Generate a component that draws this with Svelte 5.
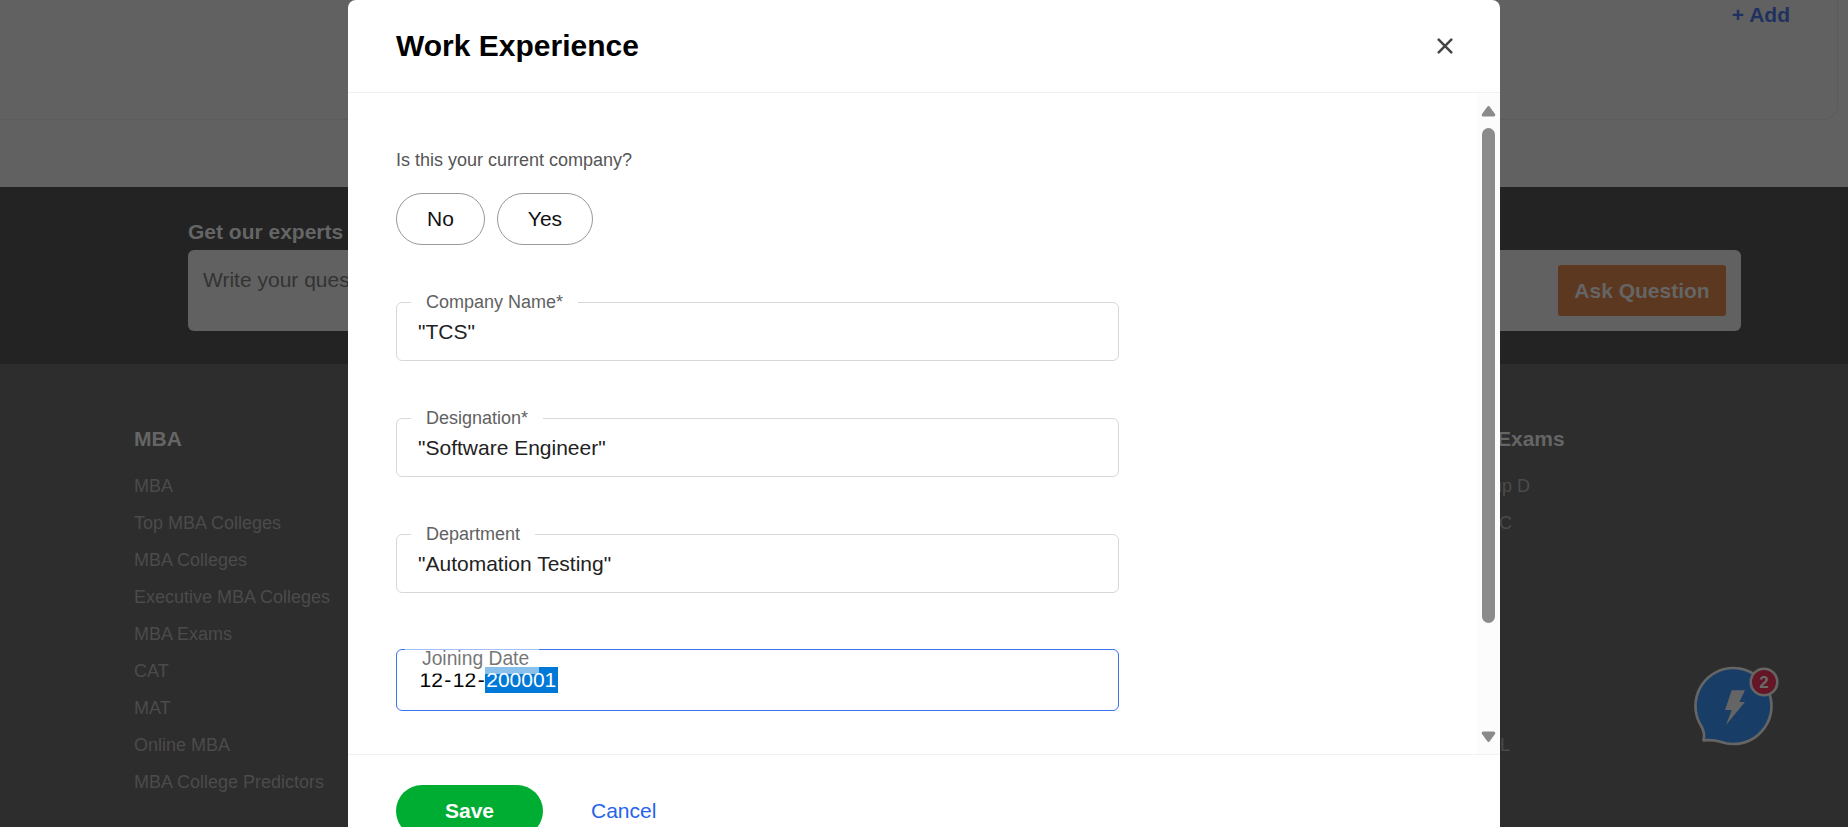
<script>
  const mbaLinks = [
    'MBA',
    'Top MBA Colleges',
    'MBA Colleges',
    'Executive MBA Colleges',
    'MBA Exams',
    'CAT',
    'MAT',
    'Online MBA',
    'MBA College Predictors'
  ];
  const examLinks = ['Group D', 'UPSC', '', '', '', '', '', 'CHSL'];
  const fields = [
    { label: 'Company Name*', value: '"TCS"' },
    { label: 'Designation*', value: '"Software Engineer"' },
    { label: 'Department', value: '"Automation Testing"' }
  ];
</script>

<div class="page">
  <section class="profile">
    <div class="card"><span class="add">+ Add</span></div>
  </section>

  <section class="ask">
    <div class="ask-title">Get our experts</div>
    <div class="ask-box">
      <span class="ask-hint">Write your question</span>
      <button class="ask-btn">Ask Question</button>
    </div>
  </section>

  <footer class="links">
    <div class="col">
      <h4>MBA</h4>
      {#each mbaLinks as link}
        <div class="link">{link}</div>
      {/each}
    </div>
    <div class="col exams">
      <h4>Exams</h4>
      {#each examLinks as link}
        <div class="link">{link}</div>
      {/each}
    </div>
  </footer>

  <svg class="chat" viewBox="0 0 130 110" width="130" height="110">
    <path
      d="M33.5 90.3 C34.6 85.5 34.3 81.5 31.5 76.5 A38 38 0 1 1 50.5 91.7 C44.5 89.8 39.5 90 33.5 90.3 Z"
      fill="#183d66" stroke="#656565" stroke-width="2.7" stroke-linejoin="round" />
    <path d="M61.7 40.3 H75 L69.3 52 H75 L56 75 L61.7 60 H55 Z" fill="#656565" />
    <circle cx="94" cy="32" r="13.3" fill="#641626" stroke="#656565" stroke-width="2.6" />
    <text x="94" y="38" text-anchor="middle">2</text>
  </svg>

  <div class="modal">
    <header>
      <h2>Work Experience</h2>
      <svg class="close" width="16" height="16" viewBox="0 0 16 16">
        <path d="M1.7 1.7 L14.3 14.3 M14.3 1.7 L1.7 14.3" stroke="#444" stroke-width="2.5" stroke-linecap="round" />
      </svg>
    </header>

    <div class="body">
      <div class="form">
        <div class="question">Is this your current company?</div>
        <div class="choices">
          <button class="pill no">No</button>
          <button class="pill yes">Yes</button>
        </div>
        {#each fields as f}
          <div class="field">
            <span class="label">{f.label}</span>
            <span class="value">{f.value}</span>
          </div>
        {/each}
        <div class="field date">
          <span class="parts"><i>12</i>-<i>12</i>-<i class="sel">200001</i></span>
          <span class="date-label">Joining Date</span>
        </div>
      </div>
      <div class="scrollbar">
        <svg width="15" height="12" viewBox="0 0 15 12">
          <path d="M7.5 2.5 L12.8 9.9 H2.2 Z" fill="#8b8b8b" stroke="#8b8b8b" stroke-width="3" stroke-linejoin="round" />
        </svg>
        <div class="thumb"></div>
        <svg class="down" width="15" height="12" viewBox="0 0 15 12">
          <path d="M7.5 9.5 L12.8 2.1 H2.2 Z" fill="#8b8b8b" stroke="#8b8b8b" stroke-width="3" stroke-linejoin="round" />
        </svg>
      </div>
    </div>

    <div class="actions">
      <button class="save">Save</button>
      <span class="cancel">Cancel</span>
    </div>
  </div>
</div>

<style>
  :global(body) {
    margin: 0;
    overflow: hidden;
  }
  .page,
  .page * {
    box-sizing: border-box;
  }
  .page {
    position: relative;
    width: 1848px;
    height: 827px;
    overflow: hidden;
    display: flex;
    flex-direction: column;
    font: 21px/24px 'Liberation Sans', Arial, sans-serif;
    background: #2d2d2d;
  }
  button {
    font: inherit;
    padding: 0;
    border: 0;
  }
  .profile {
    height: 187px;
    flex: none;
    background: #616161;
  }
  .card {
    width: 1838px;
    height: 120px;
    border: 1px solid #5b5b5b;
    border-width: 0 1px 1px 0;
    border-radius: 0 0 15px 0;
    padding: 3px 47px 0 0;
    text-align: right;
    font-weight: bold;
    color: #20315f;
  }
  .ask {
    height: 177px;
    flex: none;
    background: #232323;
    padding: 33px 107px 0 188px;
  }
  .ask-title {
    font-weight: bold;
    color: #656565;
    margin-bottom: 6px;
  }
  .ask-box {
    height: 81px;
    background: #616161;
    border-radius: 6px;
    display: flex;
    justify-content: space-between;
    padding: 15px 15px 0 15px;
  }
  .ask-hint {
    margin-top: 3px;
    color: #333;
  }
  .ask-btn {
    width: 168px;
    height: 51px;
    border-radius: 3px;
    background: #5c3820;
    color: #656565;
    font-weight: bold;
  }
  .links {
    display: flex;
    padding: 63px 0 0 134px;
    color: #4b4b4b;
    font-size: 18px;
    line-height: 37px;
  }
  .col {
    width: 1328px;
  }
  .col.exams {
    width: 200px;
  }
  h4 {
    margin: 0 0 17px;
    font-size: 21px;
    line-height: 24px;
    color: #656565;
  }
  .exams h4 {
    margin-left: 35px;
  }
  .link {
    height: 37px;
  }
  .chat {
    position: absolute;
    left: 1670px;
    top: 650px;
  }
  .chat text {
    font: bold 17px 'Liberation Sans', Arial, sans-serif;
    fill: #6b6b6b;
  }
  .modal {
    position: absolute;
    left: 348px;
    top: 0;
    width: 1152px;
    height: 840px;
    background: #fff;
    border-radius: 8px 8px 0 0;
    display: flex;
    flex-direction: column;
  }
  header {
    height: 93px;
    flex: none;
    border-bottom: 1px solid #f1f1f1;
    display: flex;
    align-items: center;
    justify-content: space-between;
    padding: 0 47px 0 48px;
  }
  h2 {
    margin: 0;
    font-size: 30px;
    line-height: 36px;
    color: #000;
  }
  .body {
    height: 662px;
    flex: none;
    border-bottom: 1px solid #f1f1f1;
    display: flex;
    justify-content: space-between;
  }
  .form {
    padding: 55px 0 0 48px;
    width: 771px;
  }
  .question {
    font-size: 18px;
    color: #555;
    margin-bottom: 21px;
  }
  .choices {
    display: flex;
    gap: 12px;
  }
  .pill {
    height: 52px;
    border: 1px solid #999;
    border-radius: 26px;
    background: #fff;
    color: #111;
  }
  .no {
    width: 89px;
  }
  .yes {
    width: 96px;
  }
  .field {
    position: relative;
    height: 59px;
    margin-top: 57px;
    border: 1px solid #d8d8d8;
    border-radius: 6px;
    display: flex;
    align-items: center;
    padding-left: 21px;
    color: #222;
  }
  .label {
    position: absolute;
    left: 14px;
    top: -13px;
    padding: 0 15px;
    background: #fff;
    font-size: 18px;
    color: #616161;
  }
  .field.date {
    height: 62px;
    margin-top: 56px;
    border-color: #3a74ec;
    color: #000;
  }
  .parts {
    display: flex;
    line-height: 26px;
  }
  .parts i {
    font-style: normal;
    padding: 0 1.5px;
  }
  .parts .sel {
    background: #0078d7;
    color: #fff;
  }
  .date-label {
    position: absolute;
    left: 8px;
    top: -7px;
    width: 134px;
    padding-left: 17px;
    background: #fff;
    color: #000;
    opacity: 0.54;
    font-size: 19.3px;
    line-height: 31px;
  }
  .scrollbar {
    width: 23px;
    background: #fcfcfc;
    display: flex;
    flex-direction: column;
    align-items: center;
    padding-top: 12px;
  }
  .thumb {
    width: 13px;
    height: 495px;
    margin: 11px 0 108px;
    border-radius: 7px;
    background: #8b8b8b;
  }
  .actions {
    display: flex;
    padding: 30px 0 0 48px;
  }
  .save {
    width: 147px;
    height: 52px;
    border-radius: 26px;
    background: #00ad33;
    color: #fff;
    font-weight: bold;
  }
  .cancel {
    margin: 14px 0 0 48px;
    color: #2563eb;
  }
</style>
